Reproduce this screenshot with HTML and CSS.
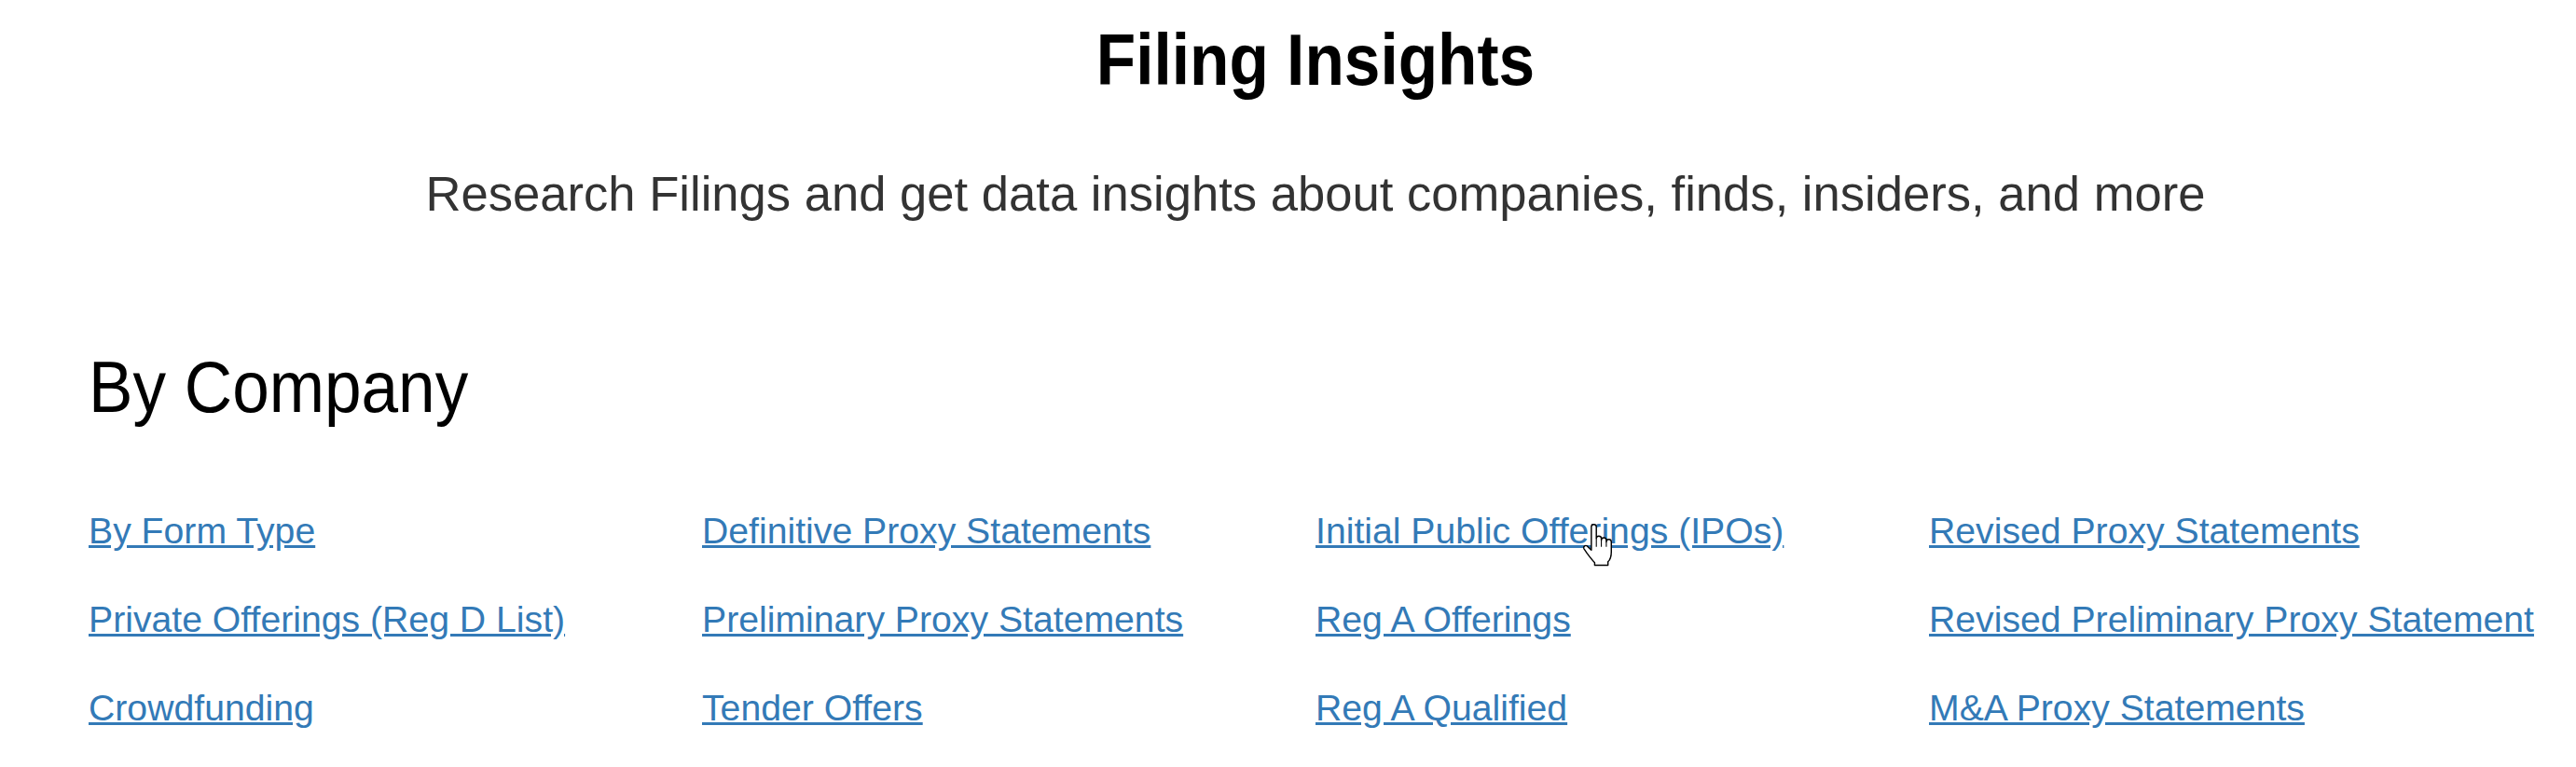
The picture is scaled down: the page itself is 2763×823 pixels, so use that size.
FILE: index.html
```html
<!DOCTYPE html>
<html lang="en">
<head>
<meta charset="utf-8">
<title>Filing Insights</title>
<link rel="stylesheet" href="styles.css">
</head>
<body>
<main class="page">
  <header class="hero">
    <h1 class="hero-title">Filing Insights</h1>
    <p class="hero-sub">Research Filings and get data insights about companies, finds, insiders, and more</p>
  </header>
  <section class="section">
    <h2 class="section-title">By Company</h2>
    <ul class="link-grid">
      <li><a href="#">By Form Type</a></li>
      <li><a href="#">Definitive Proxy Statements</a></li>
      <li><a href="#">Initial Public Offerings (IPOs)</a></li>
      <li><a href="#">Revised Proxy Statements</a></li>
      <li><a href="#">Private Offerings (Reg D List)</a></li>
      <li><a href="#">Preliminary Proxy Statements</a></li>
      <li><a href="#">Reg A Offerings</a></li>
      <li><a href="#">Revised Preliminary Proxy Statement</a></li>
      <li><a href="#">Crowdfunding</a></li>
      <li><a href="#">Tender Offers</a></li>
      <li><a href="#">Reg A Qualified</a></li>
      <li><a href="#">M&amp;A Proxy Statements</a></li>
    </ul>
  </section>
</main>
<svg class="cursor" viewBox="0 0 20 28" width="36" height="50" aria-hidden="true">
  <path d="M6 3 a1.5 1.5 0 0 1 3 0 V10 a1.5 1.5 0 0 1 3 0 V11 a1.5 1.5 0 0 1 3 0 V12 a1.5 1.5 0 0 1 3 0 V18 c0 3 -1 5 -2 6 V26 H8 V24.5 c-1.5 -1.5 -3 -3.5 -4.5 -5.5 L1.5 16 a1.3 1.3 0 0 1 2 -1.5 L6 17 Z" fill="#fff" stroke="#000" stroke-width="0.8" stroke-linejoin="round"/>
  <path d="M9 10 V15 M12 11 V15 M15 12 V15" fill="none" stroke="#000" stroke-width="0.6"/>
</svg>
</body>
</html>
```

FILE: styles.css
```css
html, body {
  margin: 0;
  padding: 0;
  background: #ffffff;
}

body {
  font-family: "Liberation Sans", Arial, Helvetica, sans-serif;
  color: #000;
  width: 2763px;
  height: 823px;
  overflow: hidden;
  position: relative;
}

.page {
  margin: 0 36px 0 95px;
}

.hero {
  text-align: center;
}

.hero-title {
  margin: 21px 0 0;
  font-size: 78px;
  line-height: 86px;
  font-weight: 700;
  color: #000;
  transform: scaleX(0.89);
  transform-origin: 50% 50%;
}

.hero-sub {
  margin: 70px 0 0;
  font-size: 52.6px;
  line-height: 62px;
  color: #333333;
}

.section {
  margin-top: 133px;
}

.section-title {
  margin: 0;
  font-size: 78px;
  line-height: 86px;
  font-weight: 400;
  color: #000;
  transform: scaleX(0.912);
  transform-origin: 0 50%;
}

.link-grid {
  list-style: none;
  margin: 64px 0 0;
  padding: 0;
  display: grid;
  grid-template-columns: repeat(4, 1fr);
  grid-auto-rows: 95px;
}

.link-grid li {
  font-size: 39.2px;
  line-height: 95px;
  white-space: nowrap;
}

.link-grid a {
  color: #337ab7;
  text-decoration: underline;
}

.cursor {
  position: absolute;
  left: 1696px;
  top: 560px;
}
```
